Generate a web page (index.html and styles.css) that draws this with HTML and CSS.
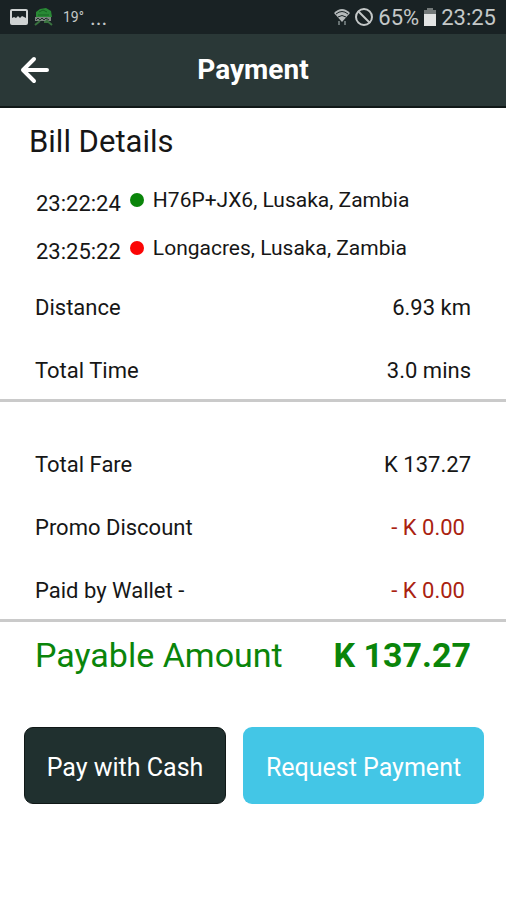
FILE: index.html
```html
<!DOCTYPE html>
<html lang="en">
<head>
<meta charset="utf-8">
<meta name="viewport" content="width=device-width, initial-scale=1">
<title>Payment</title>
<link rel="stylesheet" href="styles.css">
</head>
<body>
<div class="status">
  <div class="status-group">
    <svg width="18" height="16" viewBox="0 0 18 16"><rect x="1" y="1" width="16" height="14" rx="1" fill="#192224" stroke="#cfd3d3" stroke-width="2"/><path d="M2 14V9l2-1 2 1 2-2 2 2 2-2 2 1 2 1v5z" fill="#cfd3d3"/></svg>
    <svg width="19" height="18" viewBox="0 0 19 18"><path d="M2 9V4l4-3 6-1 5 3 1 6z" fill="#298a35"/><path d="M5 4l4-2 4 2M4 7h11" stroke="#176222" stroke-width="1" fill="none"/><path d="M1 9h16v4H1z" fill="#7b857f"/><path d="M2 12l2-2 2 2 2-2 2 2 2-2 3 2" stroke="#252e2e" stroke-width="1" fill="none"/><path d="M6 13l-5 4M12 12l6 5M10 14h5" stroke="#39733f" stroke-width="2" fill="none"/></svg>
    <span class="temperature">19°</span>
    <span class="dots">...</span>
  </div>
  <div class="status-group status-right">
    <svg width="16" height="18" viewBox="0 0 16 18"><path d="M0 5Q8-3 16 5L8 14z" fill="#b4b9ba"/><path d="M2 6q6-5 12 0M4 9q4-3 8 0" fill="none" stroke="#192224"/><path d="M5 13v4M11 13v4" fill="none" stroke="#667071" stroke-width="2"/></svg>
    <svg width="18" height="18" viewBox="0 0 18 18" fill="none" stroke="#c4c8c8" stroke-width="2"><circle cx="9" cy="9" r="8"/><path d="M3 3l12 12"/></svg>
    <span>65%</span>
    <svg width="12" height="18" viewBox="0 0 12 18"><path d="M3 0h6v2h3v5H0V2h3z" fill="#737979"/><path d="M0 6h12v12H0z" fill="#e2e4e4"/></svg>
    <span>23:25</span>
  </div>
</div>
<header class="appbar">
  <button class="back" type="button" aria-label="Back"><svg width="30" height="28" viewBox="0 0 30 28" fill="none" stroke="#fff" stroke-width="4" stroke-linecap="round" stroke-linejoin="round"><path d="M27 14H3M14 3L3 14l11 11"/></svg></button>
  <h1>Payment</h1>
</header>
<main>
  <h2>Bill Details</h2>
  <ul class="stops">
    <li><time>23:22:24</time><i class="dot start"></i><span class="place">H76P+JX6, Lusaka, Zambia</span></li>
    <li><time>23:25:22</time><i class="dot end"></i><span class="place">Longacres, Lusaka, Zambia</span></li>
  </ul>
  <dl class="rows trip">
    <div><dt>Distance</dt><dd>6.93 km</dd></div>
    <div><dt>Total Time</dt><dd>3.0 mins</dd></div>
  </dl>
  <dl class="rows fare">
    <div><dt>Total Fare</dt><dd>K 137.27</dd></div>
    <div><dt>Promo Discount</dt><dd class="minus">- K 0.00</dd></div>
    <div><dt>Paid by Wallet -</dt><dd class="minus">- K 0.00</dd></div>
  </dl>
  <dl class="payable"><dt>Payable Amount</dt><dd>K 137.27</dd></dl>
  <div class="actions">
    <button class="cash" type="button">Pay with Cash</button>
    <button class="request" type="button">Request Payment</button>
  </div>
</main>
</body>
</html>
```
FILE: styles.css
```css
* { box-sizing: border-box; }
body { margin: 0; background: #fff; color: #161616; font-family: Roboto, sans-serif; font-size: 22px; }
h1, h2, ul, dl, dd { margin: 0; padding: 0; }
button { border: 0; padding: 0; font: inherit; cursor: pointer; }
svg { display: block; }

.status { display: flex; justify-content: space-between; height: 34px; padding: 0 10px; background: #192224; color: #c4c8c8; }
.status-group { display: flex; align-items: center; gap: 6px; }
.status-right { gap: 5px; }
.temperature { margin-left: 4px; font-size: 14px; }

.appbar { display: grid; grid-template-columns: 30px 1fr 30px; align-items: center; height: 74px; padding: 0 20px; background: #2a3837; color: #fff; border-bottom: 2px solid #101817; }
.back { background: none; }
.appbar h1 { text-align: center; font-size: 28px; line-height: 32px; font-weight: 700; }

h2 { padding: 14px 29px 0; font-size: 31px; line-height: 40px; font-weight: 400; }
.stops { list-style: none; padding: 14px 36px 0; }
.stops li { display: flex; align-items: center; height: 48px; }
.stops time { padding-top: 6px; }
.dot { width: 14px; height: 14px; margin: 0 9px; border-radius: 50%; }
.start { background: #0a850a; }
.end { background: #fb0505; }
.place { font-size: 21px; }

.rows { padding: 0 35px; border-bottom: 3px solid #cacaca; }
.rows div { display: flex; justify-content: space-between; align-items: center; height: 63px; padding-top: 6px; }
.trip { padding-top: 1px; }
.fare { padding-top: 28px; }
.rows .minus { padding-right: 6px; color: #aa2210; }
.payable { display: flex; justify-content: space-between; padding: 12px 35px 0; color: #0a850a; font-size: 34px; line-height: 42px; }
.payable dd { font-weight: 700; }

.actions { display: grid; grid-template-columns: 202fr 241fr; gap: 17px; padding: 51px 22px 0 24px; }
.actions button { height: 77px; padding-top: 3px; border-radius: 9px; color: #fff; font-size: 25px; }
.actions .cash { background: #20302f; border: 1px solid #101817; }
.actions .request { background: #43c6e6; }
```
